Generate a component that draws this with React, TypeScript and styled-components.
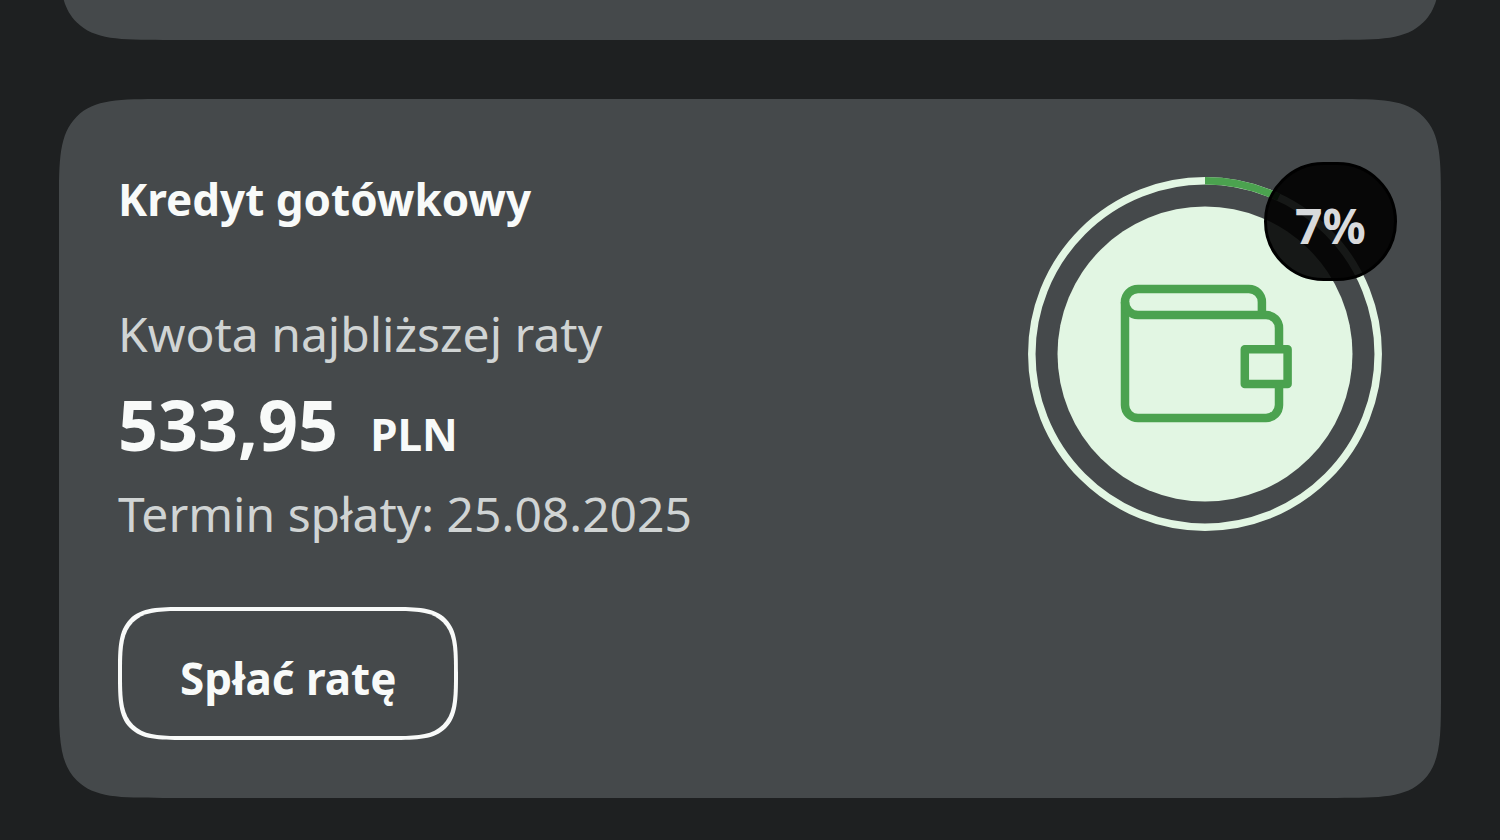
import React from "react";
import styled, { createGlobalStyle } from "styled-components";

const color = {
  page: "#1e2021",
  card: "#45494b",
  text: "#f8faf9",
  muted: "#d0d4d4",
  mint: "#e2f6e3",
  green: "#4ba24f",
};

const GlobalStyle = createGlobalStyle`
  * { box-sizing: border-box; }
  body {
    margin: 0;
    background: ${color.page};
    color: ${color.text};
    font-family: "Noto Sans", "Open Sans", sans-serif;
  }
`;

const Feed = styled.main`
  display: flex;
  flex-direction: column;
  gap: 59px;
  min-height: 100vh;
  padding: 0 59px 41px;
  overflow: hidden;
`;

const Card = styled.section`
  display: flex;
  justify-content: space-between;
  align-items: flex-start;
  padding: 68px 59px 58px;
  border-radius: 56px;
  background: ${color.card};

  @supports (corner-shape: squircle) {
    border-radius: 104px;
    corner-shape: superellipse(1.9);
  }
`;

/* The previous card, scrolled almost out of view. */
const ScrolledCard = styled(Card)`
  min-height: 240px;
  margin-top: -200px;
`;

const Details = styled.div`
  display: flex;
  flex-direction: column;
  align-items: flex-start;
`;

const Title = styled.h2`
  margin: 0 0 71px;
  font-size: 44px;
  font-weight: 700;
  line-height: 64px;
`;

const Note = styled.p`
  margin: 0;
  color: ${color.muted};
  font-size: 48px;
  line-height: 64px;
`;

const Amount = styled.p`
  display: flex;
  align-items: baseline;
  gap: 32px;
  margin: 10px 0;
  font-size: 70px;
  font-weight: 700;
  line-height: 96px;
`;

const Currency = styled.span`
  font-size: 44px;
  line-height: 64px;
`;

const PayButton = styled.button`
  margin-top: 61px;
  padding: 35px 58px 26px;
  border: 4px solid ${color.text};
  border-radius: 48px;
  background: transparent;
  color: inherit;
  font-family: inherit;
  font-size: 44px;
  font-weight: 700;
  line-height: 64px;
  cursor: pointer;

  @supports (corner-shape: squircle) {
    border-radius: 66px;
    corner-shape: superellipse(1.8);
  }
`;

const Progress = styled.div`
  position: relative;
  flex: none;
  margin-top: 10px;
`;

const Ring = styled.svg`
  display: block;
  width: 354px;
  height: 354px;
`;

const Badge = styled.span`
  position: absolute;
  top: -15px;
  right: -15px;
  display: flex;
  align-items: center;
  justify-content: center;
  width: 133px;
  height: 119px;
  padding-top: 8px;
  border: 3px solid #000;
  border-radius: 60px;
  background: rgba(0, 0, 0, 0.9);
  color: #d8dadc;
  font-size: 48px;
  font-weight: 700;
  line-height: 64px;
`;

function LoanProgress({ percent }: { percent: number }) {
  return (
    <Progress>
      <Ring viewBox="0 0 354 354" fill="none" aria-hidden="true">
        <circle cx="177" cy="177" r="173.2" stroke={color.mint} strokeWidth="7.5" />
        <circle
          cx="177"
          cy="177"
          r="173.2"
          stroke={color.green}
          strokeWidth="7.5"
          pathLength="100"
          strokeDasharray={`${percent} 100`}
          transform="rotate(-90 177 177)"
        />
        <circle cx="177" cy="177" r="147.5" fill={color.mint} />
        <g stroke={color.green} strokeWidth="8.5">
          <path d="M233.9 138V125a13 13 0 0 0-13-13H110a13 13 0 0 0-13 13v103a13 13 0 0 0 13 13h128a13 13 0 0 0 13-13v-21" />
          <path d="M97 125a13 13 0 0 0 13 13h128a13 13 0 0 1 13 13v21" />
          <rect x="216.8" y="172.3" width="42.8" height="34.6" strokeLinejoin="round" />
        </g>
      </Ring>
      <Badge>{percent}%</Badge>
    </Progress>
  );
}

export default function App() {
  return (
    <>
      <GlobalStyle />
      <Feed>
        <ScrolledCard />
        <Card>
          <Details>
            <Title>Kredyt gotówkowy</Title>
            <Note>Kwota najbliższej raty</Note>
            <Amount>
              533,95 <Currency>PLN</Currency>
            </Amount>
            <Note>Termin spłaty: 25.08.2025</Note>
            <PayButton type="button">Spłać ratę</PayButton>
          </Details>
          <LoanProgress percent={7} />
        </Card>
      </Feed>
    </>
  );
}
